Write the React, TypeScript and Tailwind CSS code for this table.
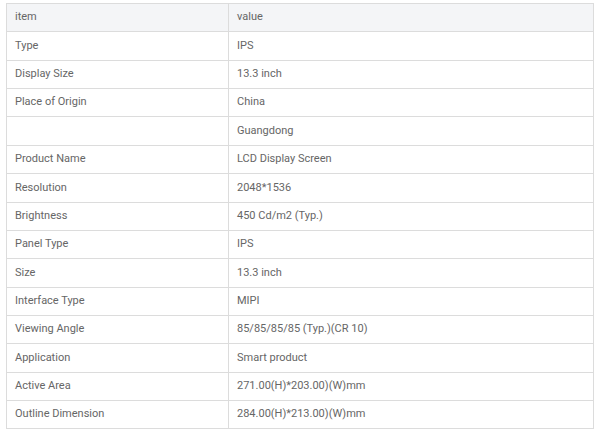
const rows: [string, string][] = [
  ["Type", "IPS"],
  ["Display Size", "13.3 inch"],
  ["Place of Origin", "China"],
  ["", "Guangdong"],
  ["Product Name", "LCD Display Screen"],
  ["Resolution", "2048*1536"],
  ["Brightness", "450 Cd/m2 (Typ.)"],
  ["Panel Type", "IPS"],
  ["Size", "13.3 inch"],
  ["Interface Type", "MIPI"],
  ["Viewing Angle", "85/85/85/85 (Typ.)(CR 10)"],
  ["Application", "Smart product"],
  ["Active Area", "271.00(H)*203.00)(W)mm"],
  ["Outline Dimension", "284.00(H)*213.00)(W)mm"],
];

// rows that are one pixel taller, so the table fills its 425px
const tall = [0, 3, 5, 8, 11];

export default function App() {
  return (
    <div className="w-[600px] h-[432px] bg-white pt-[3px] pl-[6px] font-['Roboto',sans-serif] text-[11px] text-[#666]">
      <table className="w-[588px] border-collapse table-fixed">
        <colgroup>
          <col className="w-[222px]" />
          <col />
        </colgroup>
        <thead>
          <tr className="h-[28px] bg-[#f4f5f7]">
            <th className="border border-[#dcdcdc] px-2 text-left font-normal">item</th>
            <th className="border border-[#dcdcdc] px-2 text-left font-normal">value</th>
          </tr>
        </thead>
        <tbody>
          {rows.map(([k, v], i) => (
            <tr key={i} className={tall.includes(i) ? "h-[29px]" : "h-[28px]"}>
              <td className="border border-[#dcdcdc] px-2">{k}</td>
              <td className="border border-[#dcdcdc] px-2">{v}</td>
            </tr>
          ))}
        </tbody>
      </table>
    </div>
  );
}
